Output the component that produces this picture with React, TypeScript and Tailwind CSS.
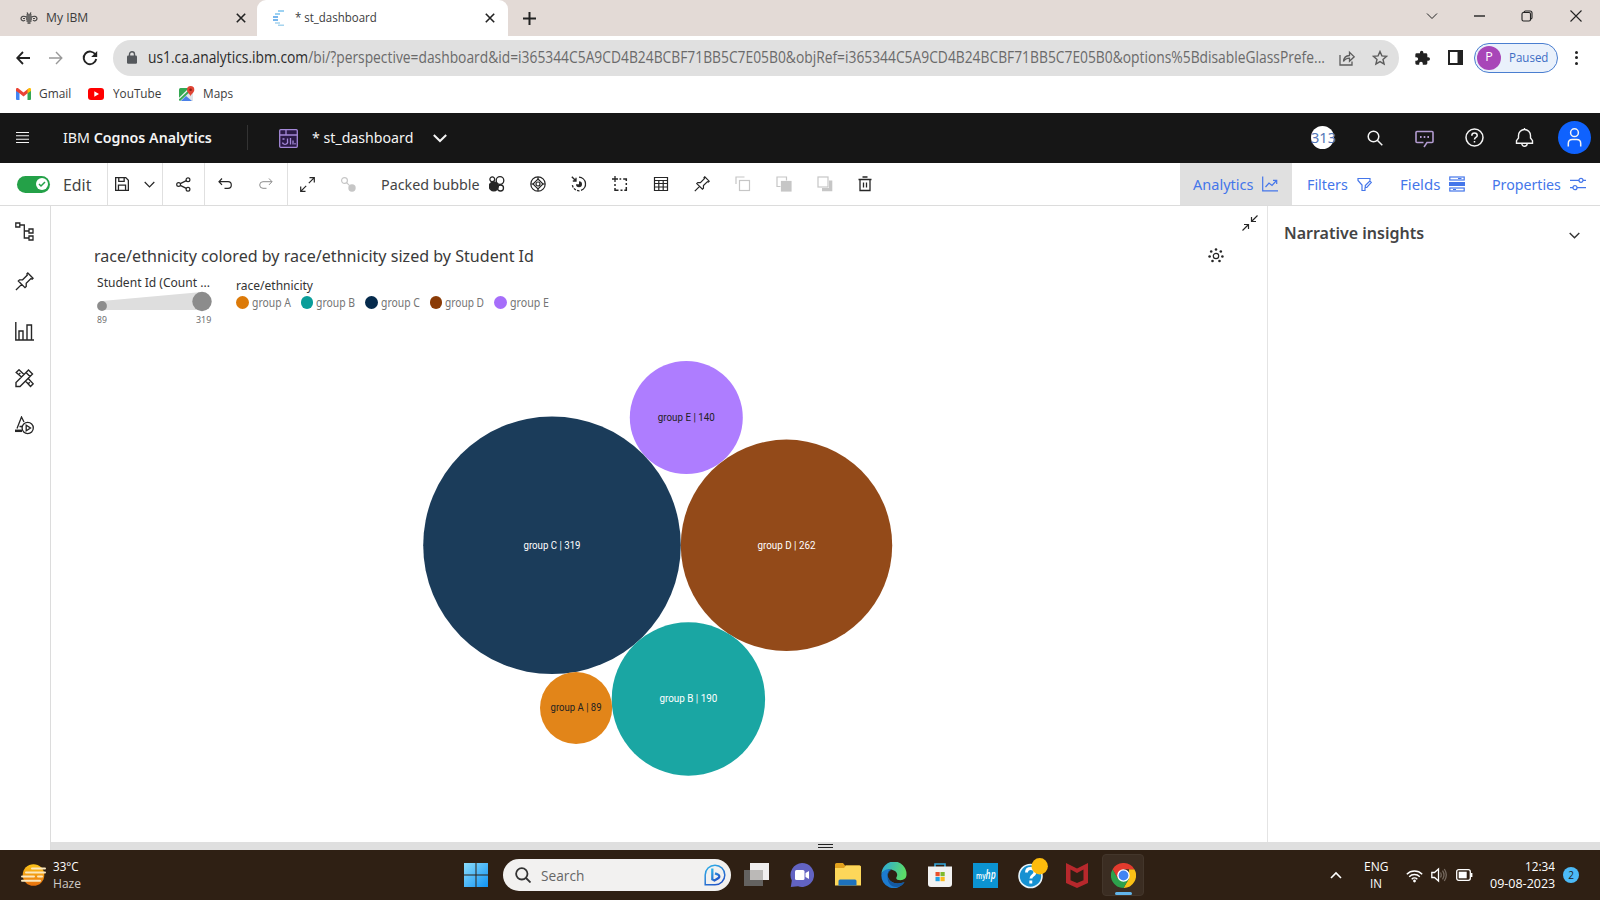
import { useLayoutEffect, useRef, useState, type ReactNode } from 'react';

/* A single line of text condensed or widened to a given advance width. */
function Fit({ w, className = '', children }: { w: number; className?: string; children: ReactNode }) {
  const ref = useRef<HTMLSpanElement>(null);
  const [k, setK] = useState(1);
  useLayoutEffect(() => {
    if (ref.current) setK(w / ref.current.offsetWidth);
  }, [w]);
  return (
    <span className={`block shrink-0 whitespace-nowrap ${className}`} style={{ width: w }}>
      <span ref={ref} className="inline-block origin-left" style={{ transform: `scaleX(${k})` }}>
        {children}
      </span>
    </span>
  );
}

function Ic({ s = 16, v = 16, sw = 1, className = '', children }: { s?: number; v?: number; sw?: number; className?: string; children: ReactNode }) {
  return (
    <svg width={s} height={s} viewBox={`0 0 ${v} ${v}`} fill="none" stroke="currentColor" strokeWidth={sw} className={`block shrink-0 ${className}`}>
      {children}
    </svg>
  );
}

function Cell({ className = '', children }: { className?: string; children: ReactNode }) {
  return <div className={`flex h-full shrink-0 items-center justify-center ${className}`}>{children}</div>;
}

const X = ({ s = 10, sw = 1.6 }: { s?: number; sw?: number }) => (
  <Ic s={s} v={10} sw={sw}><path d="M.8.8l8.4 8.4M9.2.8L.8 9.2" /></Ic>
);

const Pin = ({ s, sw }: { s: number; sw: number }) => (
  <Ic s={s} v={20} sw={sw}>
    <path d="M1 19l6-6M3.500 9.500l7 7 1.300-1.300V12l5-5 1.200.5 1-1L13.500 1l-1 1 .5 1.200-5 5H4.800z" />
  </Ic>
);

function TabStrip() {
  return (
    <div className="flex h-9 items-start bg-[#e3dad6]">
      <div className="flex h-9 w-[257px] items-center pl-[20px]">
        <svg width="18" height="13" viewBox="0 0 18 13" className="shrink-0" fill="none" stroke="#444" strokeWidth="1.200">
          <path d="M6 5C4.500 3.800 1 4 1 6.500s3 3 4 1.500M12 5c1.500-1.200 5-1 5 1.500s-3 3-4 1.500M3 6.500h2M13 6.500h2" />
          <path d="M6.500 3h5M6 5h6M6 7h6M6.500 9h5M7.500 11h3M7 .5l1 1.500M11 .5l-1 1.500" strokeWidth="1.300" />
        </svg>
        <Fit w={42} className="ml-[8px] text-[13px] text-[#3c3c3c]">My IBM</Fit>
        <div className="ml-[148px] text-[#222]"><X /></div>
      </div>
      <div className="flex h-9 w-[251px] items-center rounded-t-[9px] bg-white pl-[16px]">
        <svg width="12" height="16" viewBox="0 0 12 16" className="shrink-0" fill="none" strokeWidth="1.500">
          <path d="M5 1h6M2 4h5" stroke="#7ec4ee" /><path d="M0 7h5M0 10h5" stroke="#4b9fe8" /><path d="M2 13h5M5 15.200h6" stroke="#a6d4ee" />
        </svg>
        <Fit w={82} className="ml-[10px] text-[13px] text-[#3c3c3c]">* st_dashboard</Fit>
        <div className="ml-[108px] text-[#222]"><X /></div>
      </div>
      <div className="ml-[15px] flex h-9 items-center text-[#222]"><Ic s={13} v={13} sw={2}><path d="M6.500 0v13M0 6.500h13" /></Ic></div>
      <div className="ml-auto flex h-8 items-center pr-[18px] text-[#222]">
        <Ic s={12} v={12}><path d="M1 3.500l5 5 5-5" /></Ic>
        <Ic s={12} v={12} className="ml-[36px]"><path d="M0 6h11" strokeWidth="1.400" /></Ic>
        <Ic s={12} v={12} className="ml-[35px]" sw={1.1}><rect x="1" y="2.500" width="8.500" height="8.500" rx="1.500" /><path d="M3 2.200Q3.200 1 4.500 1H9q2 0 2 2v4.500q0 1.300-1.200 1.500" /></Ic>
        <Ic s={12} v={12} className="ml-[37px]" sw={1.1}><path d="M.5.5l11 11M11.500.5l-11 11" /></Ic>
      </div>
    </div>
  );
}

function AddressBar() {
  return (
    <div className="flex h-[44px] items-center bg-white pb-px pl-[16px] text-[#222]">
      <Ic s={14} v={14} sw={1.8}><path d="M14 7H1.500M7 1L1.200 7 7 13" /></Ic>
      <Ic s={14} v={14} sw={1.4} className="ml-[19px] text-[#999]"><path d="M0 7h12.500M7 1l5.800 6L7 13" /></Ic>
      <Ic s={16} v={16} sw={1.9} className="ml-[19px]"><path d="M13.500 4.800A6.300 6.300 0 1 0 14.200 9" /><path d="M15.200 1v6H9.200z" fill="currentColor" stroke="none" /></Ic>
      <div className="ml-[15px] flex h-9 w-[1286px] items-center rounded-full bg-[#e0e0e0] pl-[14px]">
        <svg width="10" height="13" viewBox="0 0 10 13" className="shrink-0"><rect y="4.500" width="10" height="8.300" rx="1.200" fill="#55585c" /><path d="M2.500 5V3.300a2.500 2.500 0 0 1 5 0V5" fill="none" stroke="#55585c" strokeWidth="1.400" /></svg>
        <Fit w={1177} className="ml-[11px] text-[15.500px] text-[#6a6a6a]">
          <span className="text-[#2b2b2b]">us1.ca.analytics.ibm.com</span>/bi/?perspective=dashboard&amp;id=i365344C5A9CD4B24BCBF71BB5C7E05B0&amp;objRef=i365344C5A9CD4B24BCBF71BB5C7E05B0&amp;options%5BdisableGlassPrefe...
        </Fit>
        <Ic s={16} v={16} sw={1.3} className="ml-[14px] text-[#5c5c5c]"><path d="M1 5v10h12v-3.500M4.500 11.500c.3-4 2.500-5.800 6-6V2.300l4.700 4.500-4.700 4.500V8.200c-3 0-4.500.8-6 3.300z" /></Ic>
        <Ic s={16} v={16} sw={1.4} className="ml-[17px] text-[#5c5c5c]"><path d="M8 1.500l1.900 4.400 4.700.4-3.600 3.100 1.100 4.600L8 11.600 3.900 14 5 9.400 1.400 6.300l4.700-.4z" /></Ic>
      </div>
      <Ic s={16} v={24} sw={0} className="ml-[15px]"><path fill="currentColor" d="M21.500 11H20V7a2 2 0 0 0-2-2h-4V3.500a2.500 2.500 0 0 0-5 0V5H4a2 2 0 0 0-2 2v3.800h1.500a2.700 2.700 0 0 1 0 5.400H2V20a2 2 0 0 0 2 2h3.800v-1.500a2.700 2.700 0 0 1 5.400 0V22H18a2 2 0 0 0 2-2v-4h1.500a2.500 2.500 0 0 0 0-5z" /></Ic>
      <svg width="15" height="15" viewBox="0 0 15 15" className="ml-[18px] shrink-0"><rect x="1" y="1" width="13" height="13" fill="none" stroke="#222" strokeWidth="2" /><path d="M9.500 1H14v13H9.500z" fill="#222" /></svg>
      <div className="ml-[11px] flex h-[30px] w-[84px] items-center rounded-full border-[1.5px] border-[#4a7ed0] bg-[#eaf1fb] pl-[2px]">
        <div className="flex size-[24px] items-center justify-center rounded-full bg-[#a846b8] text-[12.500px] text-white">P</div>
        <Fit w={39} className="ml-[8px] text-[13px] text-[#3c6cc4]">Paused</Fit>
      </div>
      <div className="ml-[17px] flex flex-col gap-[2.5px]">
        <i className="size-[3px] rounded-full bg-[#222]" /><i className="size-[3px] rounded-full bg-[#222]" /><i className="size-[3px] rounded-full bg-[#222]" />
      </div>
    </div>
  );
}

function Bookmarks() {
  return (
    <div className="flex h-[33px] items-center bg-white pb-[5px] pl-[16px] text-[13px] text-[#3c3c3c]">
      <svg width="15" height="12" viewBox="0 0 15 12" className="shrink-0">
        <path d="M0 1.500V11a1 1 0 0 0 1 1h2.500V4z" fill="#4285f4" /><path d="M15 1.500V11a1 1 0 0 1-1 1h-2.500V4z" fill="#34a853" />
        <path d="M0 1.500C0 0 1.500-.3 2.500.5l5 4 5-4V4.500l-5 4-4-3.200L0 3z" fill="#ea4335" /><path d="M15 1.500C15 0 13.500-.3 12.500.5l-1 .8v4L15 3z" fill="#fbbc04" />
      </svg>
      <Fit w={32} className="ml-[8px]">Gmail</Fit>
      <svg width="16" height="12" viewBox="0 0 16 12" className="ml-[17px] shrink-0"><rect width="16" height="12" rx="3" fill="#f00" /><path d="M6.300 3.300v5.400L11 6z" fill="#fff" /></svg>
      <Fit w={48} className="ml-[9px]">YouTube</Fit>
      <svg width="16" height="16" viewBox="0 0 16 16" className="ml-[18px] shrink-0">
        <rect y="2" width="14" height="13" rx="1.500" fill="#34a853" /><path d="M1 15L14 3v12z" fill="#dfe3e8" /><path d="M2 15l5-5 6 5z" fill="#4a80e8" /><path d="M0 12.500L10 3" stroke="#f5f5f5" strokeWidth="1.200" />
        <path d="M11.500 10.500C11.500 8 8 7 8 3.700a3.600 3.600 0 0 1 7.300 0C15.300 7 11.500 8 11.500 10.500z" fill="#e04434" /><circle cx="11.600" cy="3.700" r="1.300" fill="#8b1d14" />
      </svg>
      <Fit w={30} className="ml-[8px]">Maps</Fit>
    </div>
  );
}

function AppHeader() {
  return (
    <div className="flex h-[50px] items-center bg-[#161616] pb-px pl-[16px] font-['Noto_Sans','Open_Sans',sans-serif] text-[#f4f4f4]">
      <Ic s={13} v={13} sw={1.1}><path d="M0 1.500h13M0 4.800h13M0 8.200h13M0 11.500h13" /></Ic>
      <Fit w={149} className="ml-[34px] text-[15px]">IBM <b className="font-semibold">Cognos Analytics</b></Fit>
      <div className="ml-[35px] h-[25px] w-px bg-[#333]" />
      <Ic s={19} v={19} sw={1.3} className="ml-[31px] mt-px text-[#a488d8]"><rect x=".7" y=".7" width="17.600" height="17.600" rx="1" fill="#2b1a47" /><path d="M.7 6h17.600M7 .7V6M3.500 10h2M8.500 9.500v2.500a2.500 2.500 0 0 1-5 1.500M11.500 9v6.500M14 11.500v4M16 14v1.500" /></Ic>
      <Fit w={101} className="ml-[14px] pb-px text-[15px]">* st_dashboard</Fit>
      <Ic s={14} v={14} sw={2} className="ml-[20px]"><path d="M.8 4l6.200 6 6.200-6" /></Ic>
      <div className="ml-auto flex h-[23px] w-[26px] items-center">
        <div className="flex size-[23px] items-center rounded-full bg-white"><Fit w={25} className="text-[14px] text-[#5577b8]">313</Fit></div>
      </div>
      <Cell className="ml-[13px] w-[50px]"><Ic s={16} v={16} sw={1.5}><circle cx="6.500" cy="6.500" r="5.300" /><path d="M10.300 10.300l5 5" /></Ic></Cell>
      <Cell className="w-[49px]"><Ic s={19} v={19} sw={1.6} className="mt-px text-[#b29bd0]"><path d="M9 18l3-4.500h5q1 0 1-1v-9q0-1-1-1H2q-1 0-1 1v9q0 1 1 1h6.500" /><path d="M5 8h1.600M8.700 8h1.600M12.400 8H14" strokeWidth="1.900" /></Ic></Cell>
      <Cell className="w-[50px]"><Ic s={19} v={19} sw={1.5}><circle cx="9.500" cy="9.500" r="8.500" /><path d="M6.800 7.700c0-1.800 1-2.700 2.700-2.700s2.700 1 2.700 2.400c0 2.200-2.700 1.900-2.700 4M9.500 13v1.600" /></Ic></Cell>
      <Cell className="w-[50px]"><Ic s={19} v={19} sw={1.4}><path d="M1.500 15.300v-2.600L3.500 10V7.500a6 6 0 0 1 12 0V10l2 2.700v2.600zM6.800 15.500a2.700 2.700 0 0 0 5.400 0M9.500 0v1.700" /></Ic></Cell>
      <Cell className="mr-px w-[50px]"><div className="flex size-[33px] items-center justify-center rounded-full bg-[#0f62fe]"><Ic s={19} v={19} sw={1.5}><circle cx="9.500" cy="4.700" r="3.900" /><path d="M3.300 18.500v-3q0-4 4-4h4.400q4 0 4 4v3" /></Ic></div></Cell>
    </div>
  );
}

function Toolbar() {
  return (
    <div className="flex h-[43px] items-center border-b border-[#dcdcdc] bg-white font-['Noto_Sans','Open_Sans',sans-serif] text-[#262626]">
      <Cell className="w-[108px] justify-start! border-r border-[#e0e0e0] pl-[17px]">
        <div className="flex h-[17px] w-[33px] items-center justify-end rounded-full bg-[#24a148] pr-[2px]">
          <div className="flex size-[12px] items-center justify-center rounded-full bg-white text-[#24a148]"><Ic s={8} v={8} sw={1.5}><path d="M1 4l2 2 4-4" /></Ic></div>
        </div>
        <Fit w={28} className="ml-[13px] pt-px text-[17px] text-[#444]">Edit</Fit>
      </Cell>
      <Cell className="w-[55px] border-r border-[#e0e0e0]">
        <Ic s={14} v={13} sw={1.2}><path d="M.6.6h9.400l2.400 2.400v9.400H.6zM3.500.6V4h5V.6M3.200 12.400V7.500h6.600v4.900" /></Ic>
        <Ic s={11} v={11} sw={1.2} className="ml-[15px]"><path d="M.7 3l4.800 5 4.800-5" /></Ic>
      </Cell>
      <Cell className="w-[42px] border-r border-[#e0e0e0] pr-px"><Ic s={15} v={15} sw={1.2}><circle cx="2.600" cy="7.500" r="1.900" /><circle cx="12" cy="2.700" r="1.900" /><circle cx="12" cy="12.300" r="1.900" /><path d="M4.300 6.600l6-3M4.300 8.400l6 3" /></Ic></Cell>
      <Cell className="w-[41px] pr-[2px]"><Ic s={14} v={14} sw={1.2}><path d="M4 1.500L1 4.700l3 3.200M1 4.700h9a3.300 3.300 0 0 1 0 6.600H6.500" /></Ic></Cell>
      <Cell className="w-[42px] border-r border-[#e0e0e0] pr-[2px] text-[#8d8d8d]"><Ic s={14} v={14}><path d="M10 1.500l3 3.200-3 3.200M13 4.700H4a3.300 3.300 0 0 0 0 6.600h3.500" /></Ic></Cell>
      <Cell className="w-[41px] pr-[2px]"><Ic s={15} v={15} sw={1.2}><path d="M9.500.7h4.800v4.800M14.300.7L8.800 6.200M5.500 14.300H.7V9.500M.7 14.300l5.500-5.500" /></Ic></Cell>
      <Cell className="w-[41px] pr-[2px] text-[#c6c6c6]"><Ic s={15} v={15} sw={1.2}><circle cx="3.500" cy="3.500" r="2.900" /><path d="M5.600 5.600l3 3" /><circle cx="11" cy="11" r="3.700" fill="currentColor" stroke="none" /></Ic></Cell>
      <Fit w={99} className="ml-[11px] text-[15px] text-[#444]">Packed bubble</Fit>
      <Cell className="ml-[-4px] w-[41px]"><Ic s={16} v={16} sw={1.3}><circle cx="3.300" cy="3.300" r="2.400" /><circle cx="11" cy="4.500" r="3.800" /><circle cx="4.800" cy="10.300" r="4.500" fill="currentColor" /><circle cx="11.500" cy="12" r="3" /></Ic></Cell>
      <Cell className="w-[41px]"><Ic s={16} v={16} sw={1.2}><circle cx="8" cy="8" r="7.200" /><path d="M8 3l5 5-5 5-5-5z" /><circle cx="8" cy="8" r="2" /><path d="M8 1v3M8 12v3M1 8h3M12 8h3" /></Ic></Cell>
      <Cell className="w-[41px]"><Ic s={16} v={16} sw={1.3}><path d="M8 1.200a6.800 6.800 0 0 1 2 13.200" /><path d="M8.500 14.800A6.800 6.800 0 0 1 1.300 8" strokeDasharray="2.500 1.200" /><path d="M.8.8l4 4M5 1.800V5H1.800" /><path d="M8 5.200a3 3 0 1 1-3 3h3z" fill="currentColor" stroke="none" /></Ic></Cell>
      <Cell className="w-[41px]"><Ic s={16} v={16} sw={1.5}><path d="M3 0v6M0 3h6" strokeWidth="1.300" /><path d="M7.500 3h1.700M11.200 3h3.100v2M14.300 7v2M14.300 11v3.300h-2M10.500 14.300h-2M6.500 14.300H3V12M3 10V8" /></Ic></Cell>
      <Cell className="w-[41px]"><Ic s={16} v={16} sw={1.2}><path d="M1.500 1.500h13v13h-13zM1.500 4.500h13M1.500 7.500h13M1.500 11h13M5.800 4.500v10M10.200 4.500v10" /></Ic></Cell>
      <Cell className="w-[41px]"><Pin s={16} sw={1.5} /></Cell>
      <Cell className="w-[41px] text-[#c6c6c6]"><Ic s={16} v={16} sw={1.2}><rect x="4.500" y="4.500" width="10" height="10" /><path d="M1 8V1h8.500" /></Ic></Cell>
      <Cell className="w-[41px] text-[#c6c6c6]"><Ic s={16} v={16} sw={1.2}><path d="M4.500 10.500h-3.500V1h9.500v3.500" /><rect x="5.500" y="5.500" width="9.500" height="9.500" fill="currentColor" /></Ic></Cell>
      <Cell className="w-[41px] text-[#c6c6c6]"><Ic s={16} v={16} sw={1.2}><path d="M12 4.500h3.300v10.800H5V12h7z" fill="currentColor" stroke="none" /><rect x="1" y="1" width="10" height="10" fill="#fff" /></Ic></Cell>
      <Cell className="w-[40px]"><Ic s={16} v={16} sw={1.3}><path d="M1.500 3.500h13M5.500 1h5M3 3.500v11h10v-11M6.500 6.500v5M9.500 6.500v5" /></Ic></Cell>
      <div className="ml-auto flex h-full text-[15px] text-[#4476ea]">
        <Cell className="w-[112px] bg-[#e0e0e0] pr-px"><Fit w={60}>Analytics</Fit><Ic s={16} v={16} sw={1.2} className="ml-[9px]"><path d="M.7.5v14.300H16M3.500 11l3.500-4 3 2.500 4.500-5M11 4.300h3.700V8" /></Ic></Cell>
        <Cell className="ml-[15px]"><Fit w={41}>Filters</Fit><Ic s={15} v={15} sw={1.2} className="ml-[9px]"><path d="M13 3.500V1.500H1v2l4 4.500v5.500h3v-3M8.300 10.500v-2l4.500-4.500 1.500 1.500-4.500 5z" /></Ic></Cell>
        <Cell className="ml-[28px]"><Fit w={40}>Fields</Fit><Ic s={16} v={16} sw={1.2} className="ml-[9px]"><rect x=".8" y="1" width="14.400" height="3" /><path d="M0 6h16v4H0z" fill="currentColor" stroke="none" /><rect x=".8" y="12" width="14.400" height="3" /><path d="M9 2.500h3.500M4 13.500h3" /></Ic></Cell>
        <Cell className="ml-[27px] mr-[14px]"><Fit w={69}>Properties</Fit><Ic s={16} v={16} sw={1.2} className="ml-[9px]"><path d="M0 4.300h9M13 4.300h3M0 11.700h3M7 11.700h9" /><circle cx="11" cy="4.300" r="2" /><circle cx="5" cy="11.700" r="2" /></Ic></Cell>
      </div>
    </div>
  );
}

function Sidebar() {
  return (
    <div className="flex w-[51px] shrink-0 flex-col items-center border-r border-[#dcdcdc] bg-white pr-[2px] text-[#262626]">
      <div className="flex h-[49px] items-end pb-[14px]"><Ic s={19} v={19} sw={1.3}><path d="M.8 1h4v4h-4zM14 7h4v4h-4zM14 14h4v4h-4zM4.800 3h4.500v13H14M9.300 9H14" /></Ic></div>
      <div className="flex h-[50px] items-end pb-[14px]"><Pin s={19} sw={1.4} /></div>
      <div className="flex h-[50px] items-end pb-[14px]"><Ic s={19} v={19} sw={1.4}><path d="M.8 0v18H19M4 18V9h4v9M12 18V3h4.500v15" /></Ic></div>
      <div className="flex h-[47px] items-end pb-[14px]"><Ic s={19} v={19} sw={1.4}><path d="M13.500 1L17.500 5 5 17.500H1v-4zM11 3.500l4 4M6.500 8L1.200 3.500 4 .8 9 5.500M3.800 5.500l1.500-1.500M10.500 12l5 5.500 2.700-2.700-5-5.300M13 15l1.800-1.800" /></Ic></div>
      <div className="flex h-[47px] items-end pb-[14px]"><Ic s={19} v={19} sw={1.3}><circle cx="12.700" cy="12" r="5.600" /><path d="M11.200 9.300v5.400l4.300-2.700z" /><path d="M2 12.500L6.500 1 9 6M4.500 10.500H7" /><path d="M0 14.800h7" strokeWidth="2.500" /></Ic></div>
    </div>
  );
}

const legend = [
  { name: 'group A', c: '#dc7a08' },
  { name: 'group B', c: '#0a9d99' },
  { name: 'group C', c: '#052a4c' },
  { name: 'group D', c: '#8a3b06' },
  { name: 'group E', c: '#a66efa' },
];

const bubbles = [
  { t: 'group E | 140', x: 686.300, y: 417.500, r: 56.500, c: '#ae7dff', f: '#222', w: 57 },
  { t: 'group C | 319', x: 552, y: 545.300, r: 128.800, c: '#1b3c5a', f: '#fff', w: 57 },
  { t: 'group D | 262', x: 786.500, y: 545.300, r: 105.700, c: '#934a19', f: '#fff', w: 58 },
  { t: 'group B | 190', x: 688.400, y: 699, r: 76.700, c: '#1aa6a3', f: '#fff', w: 58 },
  { t: 'group A | 89', x: 576.100, y: 708, r: 36.100, c: '#e28519', f: '#222', w: 51 },
];

function Canvas() {
  return (
    <div className="flex min-w-0 flex-1 flex-col bg-white font-['Noto_Sans','Open_Sans',sans-serif]">
      <div className="flex h-[66px] pl-[43px]">
        <Fit w={440} className="pt-[37px] text-[16px] leading-[26px] text-[#3a3a3a]">race/ethnicity colored by race/ethnicity sized by Student Id</Fit>
        <Ic s={16} v={16} sw={1.2} className="ml-[674px] mt-[41px] text-[#262626]"><circle cx="8" cy="9" r="2.700" /><g fill="currentColor" stroke="none"><circle cx="8" cy="2.500" r="1.300" /><circle cx="3.200" cy="4.500" r="1.300" /><circle cx="12.800" cy="4.500" r="1.300" /><circle cx="1.600" cy="9.500" r="1.300" /><circle cx="14.400" cy="9.500" r="1.300" /><circle cx="4.500" cy="14" r="1.300" /><circle cx="11.500" cy="14" r="1.300" /></g></Ic>
        <Ic s={16} v={16} sw={1.2} className="ml-[18px] mt-[9px] text-[#262626]"><path d="M15.500.5L9.500 6.500M9.500 2v4.500H14M.5 15.500l6-6M2 9.500h4.500V14" /></Ic>
      </div>
      <div className="flex h-[60px] pl-[46px]">
        <div className="w-[139px]">
          <Fit w={113} className="pt-[3px] text-[12.500px] leading-[16px] text-[#333]">Student Id (Count ...</Fit>
          <svg width="116" height="21" viewBox="0 0 116 21" className="block"><path d="M5 10L105 1v18H5z" fill="#dedede" /><circle cx="5" cy="15" r="4.900" fill="#8c8c8c" /><circle cx="105" cy="10.500" r="9.700" fill="#8c8c8c" /></svg>
          <div className="flex w-[114px] justify-between text-[9.500px] leading-[15px] text-[#6f6f6f]"><Fit w={10}>89</Fit><Fit w={15}>319</Fit></div>
        </div>
        <div className="pt-[5px]">
          <Fit w={77} className="text-[12.500px] leading-[17px] text-[#333]">race/ethnicity</Fit>
          <div className="flex h-[16px] items-center pt-px">
            {legend.map((l) => (
              <div key={l.name} className="flex w-[64.600px] items-center text-[12px] leading-[15px] text-[#757575]">
                <i className="mr-[3px] size-[12.500px] shrink-0 rounded-full" style={{ backgroundColor: l.c }} />
                <Fit w={39}>{l.name}</Fit>
              </div>
            ))}
          </div>
        </div>
      </div>
      <svg width="1215" height="510" viewBox="51 332 1215 510" className="block">
        {bubbles.map((b) => (
          <g key={b.t}>
            <circle cx={b.x} cy={b.y} r={b.r} fill={b.c} />
            <text x={b.x - b.w / 2} y={b.y + 3.300} textLength={b.w} lengthAdjust="spacingAndGlyphs" fontSize="11" fill={b.f} className="font-['Roboto',sans-serif]">{b.t}</text>
          </g>
        ))}
      </svg>
    </div>
  );
}

function Insights() {
  return (
    <div className="flex w-[333px] shrink-0 items-start justify-between border-l border-[#e4e4e4] bg-white pl-[16px] pr-[20px] pt-[14px] font-['Noto_Sans','Open_Sans',sans-serif]">
      <Fit w={140} className="text-[16px] font-semibold leading-[26px] text-[#444]">Narrative insights</Fit>
      <Ic s={11} v={11} sw={1.4} className="mt-[10px] text-[#333]"><path d="M.7 3l4.800 4.800L10.300 3" /></Ic>
    </div>
  );
}

function Taskbar() {
  return (
    <div className="flex h-[50px] items-center bg-[#2f2014] text-white">
      <svg width="26" height="24" viewBox="0 0 26 24" className="ml-[21px] shrink-0">
        <defs><linearGradient id="sun" x2="0" y2="1"><stop stopColor="#fcc419" /><stop offset="1" stopColor="#e8710f" /></linearGradient></defs>
        <circle cx="12.500" cy="12" r="10.800" fill="url(#sun)" />
        <g fill="#fbe7bd"><rect x="10" y="4.500" width="15" height="2" rx="1" /><rect x="4" y="8.500" width="21" height="2" rx="1" /><rect x="0" y="12.500" width="14" height="2" rx="1" /><rect x="16" y="12.500" width="6" height="2" rx="1" /><rect x="0" y="16.800" width="20" height="2" rx="1" /></g>
      </svg>
      <div className="ml-[6px] w-[31px] pb-px text-[12.500px] leading-[17px]"><Fit w={26}>33°C</Fit><Fit w={28} className="text-[#d0cac6]">Haze</Fit></div>
      <svg width="24" height="24" viewBox="0 0 24 24" className="ml-[380px] shrink-0">
        <defs><linearGradient id="win" x2="1" y2="1"><stop stopColor="#8bdcfb" /><stop offset="1" stopColor="#0f93f5" /></linearGradient></defs>
        <path d="M0 0h11.500v11.500H0zM12.500 0H24v11.500H12.500zM0 12.500h11.500V24H0zM12.500 12.500H24V24H12.500z" fill="url(#win)" />
      </svg>
      <div className="ml-[15px] flex h-[32px] w-[228px] shrink-0 items-center rounded-full bg-[#f2f1f0] pl-[12px] text-[#333]">
        <Ic s={16} v={16} sw={1.8}><circle cx="6.800" cy="6.800" r="5.700" /><path d="M11 11l4.500 4.500" /></Ic>
        <Fit w={43} className="ml-[10px] text-[14px] text-[#666]">Search</Fit>
        <svg width="22" height="22" viewBox="0 0 22 22" className="ml-[120px] shrink-0" fill="none">
          <defs><linearGradient id="bing" x2=".6" y2="1"><stop stopColor="#31b5ea" /><stop offset="1" stopColor="#2358c8" /></linearGradient></defs>
          <path d="M1.200 20.800V11A9.800 9.800 0 1 1 11 20.800z" stroke="url(#bing)" strokeWidth="1.500" /><path d="M8.300 4.500v10.800l2.200 1.200 4-2.400c1.500-1.200.8-3.300-.9-3.800l-2.600-.9" stroke="url(#bing)" strokeWidth="2.300" />
        </svg>
      </div>
      <div className="ml-[3px] flex h-full w-[413px] shrink-0">
        <Cell className="w-[45.800px]"><svg width="25" height="24" viewBox="0 0 25 24"><rect x="6" width="19" height="17" fill="#f0eeee" /><rect y="7" width="19" height="16" fill="#646260" /><rect x="6" y="7" width="13" height="10" fill="#bbb9b7" /></svg></Cell>
        <Cell className="w-[45.800px] pr-px"><svg width="24" height="24" viewBox="0 0 24 24"><path d="M12 0a12 12 0 1 1-4 23.300L.8 24l1-6.500A12 12 0 0 1 12 0z" fill="#6263c2" /><rect x="5" y="7" width="9.500" height="10" rx="1.500" fill="#fff" /><path d="M15.500 10l3.500-2v8l-3.500-2z" fill="#fff" /></svg></Cell>
        <Cell className="w-[45.800px]"><svg width="26" height="24" viewBox="0 0 26 24"><path d="M0 1.500Q0 0 1.500 0H8l2 2.500h14.500Q26 2.500 26 4v5H0z" fill="#e2a11d" /><path d="M0 5h9l2-2.500h13.500Q26 2.500 26 4v18.500H0z" fill="#fdd75a" /><path d="M3.500 22.500V18q0-1.500 1.500-1.500h15q1.500 0 1.500 1.500v4.500z" fill="#1d72be" /></svg></Cell>
        <Cell className="w-[45.800px]"><svg width="26" height="26" viewBox="0 0 26 26">
          <defs>
            <linearGradient id="edge" x2="1" y2=".3"><stop stopColor="#2aa6e0" /><stop offset="1" stopColor="#5bdc68" /></linearGradient>
          </defs>
          <path d="M.5 12A12.500 12.500 0 0 1 25.500 12c.3 4-2.500 6.300-6 6.300-2.500 0-4.300-1-4.300-2.300 0-.8 1-1.300 1-3.200C16.200 9.500 12 7 8 7.500 4 8 1.500 10 .5 12z" fill="url(#edge)" /><path d="M.5 12C2 8 6.500 6.500 10 7.800c-4 1.700-4.500 7-1 10.700 3.500 3.600 9 3.500 14.500 1.800A12.500 12.500 0 0 1 .5 12z" fill="#1c7bd0" /><path d="M10 7.800c-4 1.700-4.500 7-1 10.700 3.500 3.600 9 3.500 14.500 1.800-3 4.500-8 5.700-12 4C6 22 4.500 12 10 7.800z" fill="#1459a3" />
        </svg></Cell>
        <Cell className="w-[45.800px]"><svg width="26" height="24" viewBox="0 0 26 24"><path d="M8 5V1h10v4" fill="none" stroke="#35a7dc" strokeWidth="1.600" /><path d="M1 3.500h24V21q0 3-3 3H4q-3 0-3-3z" fill="#f2f2f2" /><path d="M8.500 9h4.200v4.200H8.500z" fill="#e8502b" /><path d="M13.500 9h4.200v4.200h-4.200z" fill="#7eb92c" /><path d="M8.500 14h4.200v4.200H8.500z" fill="#1fa1e4" /><path d="M13.500 14h4.200v4.200h-4.200z" fill="#fbb91c" /></svg></Cell>
        <Cell className="w-[45.800px]"><div className="flex size-[25px] items-center justify-center bg-[#0b93d2]"><Fit w={20} className="text-[12px] font-semibold leading-[14px]"><span className="text-[9px]">my</span><i>hp</i></Fit></div></Cell>
        <Cell className="w-[45.800px]"><svg width="30" height="32" viewBox="0 0 30 32" className="mb-[5px] ml-[2px]"><circle cx="12.500" cy="19" r="11.500" fill="#1591d2" stroke="#e9f4fa" strokeWidth="1.600" /><path d="M8.500 15.500c0-2.800 1.700-4 4.200-4s4.200 1.300 4.200 3.700c0 3.300-4 3-4 6.300M12.800 23.500v3" fill="none" stroke="#fff" strokeWidth="2.900" /><circle cx="21.700" cy="9.300" r="8.200" fill="#fdbb0c" /></svg></Cell>
        <Cell className="w-[45.800px]"><svg width="22" height="25" viewBox="0 0 22 25"><path d="M0 0l11 5.500L22 0v20l-11 5-11-5zM4.500 6.500v10.700L11 20l6.500-2.800V6.500L11 10z" fill="#b7282c" fillRule="evenodd" /></svg></Cell>
        <Cell className="w-[45.800px]">
          <div className="flex h-[42px] w-[42px] flex-col items-center justify-end rounded-[4px] border border-[#43362b] bg-[#3b2d22]">
            <svg width="25" height="25" viewBox="0 0 24 24"><path d="M22.400 6A12 12 0 0 1 12 24l5.200-9V6z" fill="#fbc116" /><path d="M1.600 6A12 12 0 0 0 12 24l5.200-9H6.800z" fill="#2da14c" /><path d="M12 6h10.400A12 12 0 0 0 1.600 6l5.200 9z" fill="#e33b2e" /><circle cx="12" cy="12" r="6" fill="#fff" /><circle cx="12" cy="12" r="4.700" fill="#4285f4" /></svg>
            <div className="mt-[4px] h-[3px] w-[17px] rounded-full bg-[#62b5ea]" />
          </div>
        </Cell>
      </div>
      <Ic s={12} v={12} sw={1.6} className="ml-auto"><path d="M1 9l5-5 5 5" /></Ic>
      <div className="ml-[21px] flex w-[26px] flex-col items-center text-[12.500px] leading-[17px]"><Fit w={24}>ENG</Fit><Fit w={12}>IN</Fit></div>
      <Ic s={17} v={17} sw={1.4} className="ml-[17px]"><path d="M.8 7.200a11 11 0 0 1 15.400 0M3.200 9.700a7.500 7.500 0 0 1 10.600 0M5.700 12.200a4 4 0 0 1 5.600 0" /><circle cx="8.500" cy="14" r="1.400" fill="currentColor" stroke="none" /></Ic>
      <Ic s={16} v={16} sw={1.3} className="ml-[8px]"><path d="M.8 5.500h2.700L7.500 2v12L3.500 10.500H.8z" /><path d="M9.500 5.500q1.500 2.500 0 5M11.500 3.700q3 4.300 0 8.600M13.300 2q4 6 0 12" stroke="#75695f" /></Ic>
      <svg width="17" height="12" viewBox="0 0 17 12" className="ml-[9px] shrink-0"><rect x=".7" y=".7" width="13.600" height="10.600" rx="2" fill="none" stroke="#fff" strokeWidth="1.300" /><rect x="2.700" y="2.700" width="8" height="6.600" fill="#fff" /><path d="M15.500 4v4" stroke="#fff" strokeWidth="1.800" /></svg>
      <div className="ml-[17px] flex w-[65px] shrink-0 flex-col items-end pb-px text-[12.500px] leading-[17px]"><Fit w={30}>12:34</Fit><Fit w={65}>09-08-2023</Fit></div>
      <div className="ml-[8px] mr-[21px] flex size-[16px] shrink-0 items-center justify-center rounded-full bg-[#4cbaf7] text-[10px] text-[#222]">2</div>
    </div>
  );
}

export default function App() {
  return (
    <div className="flex h-[900px] w-[1600px] flex-col overflow-hidden bg-white font-['Open_Sans','Noto_Sans',sans-serif]">
      <TabStrip />
      <AddressBar />
      <Bookmarks />
      <AppHeader />
      <Toolbar />
      <div className="flex min-h-0 flex-1">
        <Sidebar />
        <div className="flex min-w-0 flex-1 flex-col">
          <div className="flex h-[636px]">
            <Canvas />
            <Insights />
          </div>
          <div className="flex h-[8px] flex-col items-center justify-center gap-[1.500px] bg-[#dfdfdf]">
            <i className="h-px w-[15px] bg-[#222]" />
            <i className="h-px w-[15px] bg-[#222]" />
          </div>
        </div>
      </div>
      <Taskbar />
    </div>
  );
}
